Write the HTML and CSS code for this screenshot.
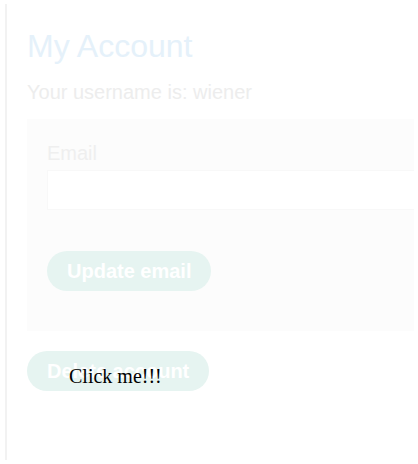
FILE: index.html
```html
<!DOCTYPE html>
<html>
<head>
<meta charset="utf-8">
<link rel="stylesheet" href="styles.css">
</head>
<body>
<div class="frame">
  <h1 class="title">My Account</h1>
  <p class="user">Your username is: wiener</p>
  <form class="panel">
    <label class="label">Email</label>
    <input class="input" type="text">
    <button class="btn" type="button">Update email</button>
  </form>
  <button class="btn" type="button">Delete account</button>
</div>
<div class="decoy">Click me!!!</div>
</body>
</html>
```
FILE: styles.css
```css
html, body {
  margin: 0;
  padding: 0;
  background: #ffffff;
}
body {
  position: relative;
  width: 418px;
  height: 464px;
  overflow: hidden;
}
.frame {
  box-sizing: border-box;
  margin: 4px 0 0 5px;
  width: 409px;
  height: 456px;
  border-left: 2px solid #f2f2f2;
  padding: 22px 0 0 20px;
  overflow: hidden;
  font-family: "Liberation Sans", Arial, sans-serif;
}
.title {
  margin: 0;
  font-size: 32px;
  line-height: 40px;
  font-weight: normal;
  color: #e5f1fa;
}
.user {
  margin: 14px 0 15px;
  font-size: 20px;
  line-height: 24px;
  color: #ededed;
}
.panel {
  display: flex;
  flex-direction: column;
  align-items: flex-start;
  background: #fcfcfc;
  padding: 22px 0 40px 20px;
  margin: 0 0 20px;
}
.label {
  display: block;
  font-size: 20px;
  line-height: 24px;
  color: #efefef;
}
.input {
  box-sizing: border-box;
  margin: 5px 0 41px;
  width: calc(100% + 20px);
  height: 40px;
  background: #ffffff;
  border: 1px solid #f8f8f8;
  outline: none;
}
.btn {
  display: block;
  height: 40px;
  padding: 0 20px;
  border: none;
  border-radius: 20px;
  background: #e6f4f1;
  color: #ffffff;
  font-family: "Liberation Sans", Arial, sans-serif;
  font-weight: bold;
  font-size: 20px;
  line-height: 40px;
}
.decoy {
  position: absolute;
  top: 365px;
  left: 69px;
  font-family: "Liberation Serif", "Times New Roman", serif;
  font-size: 20px;
  color: #000000;
}
```
